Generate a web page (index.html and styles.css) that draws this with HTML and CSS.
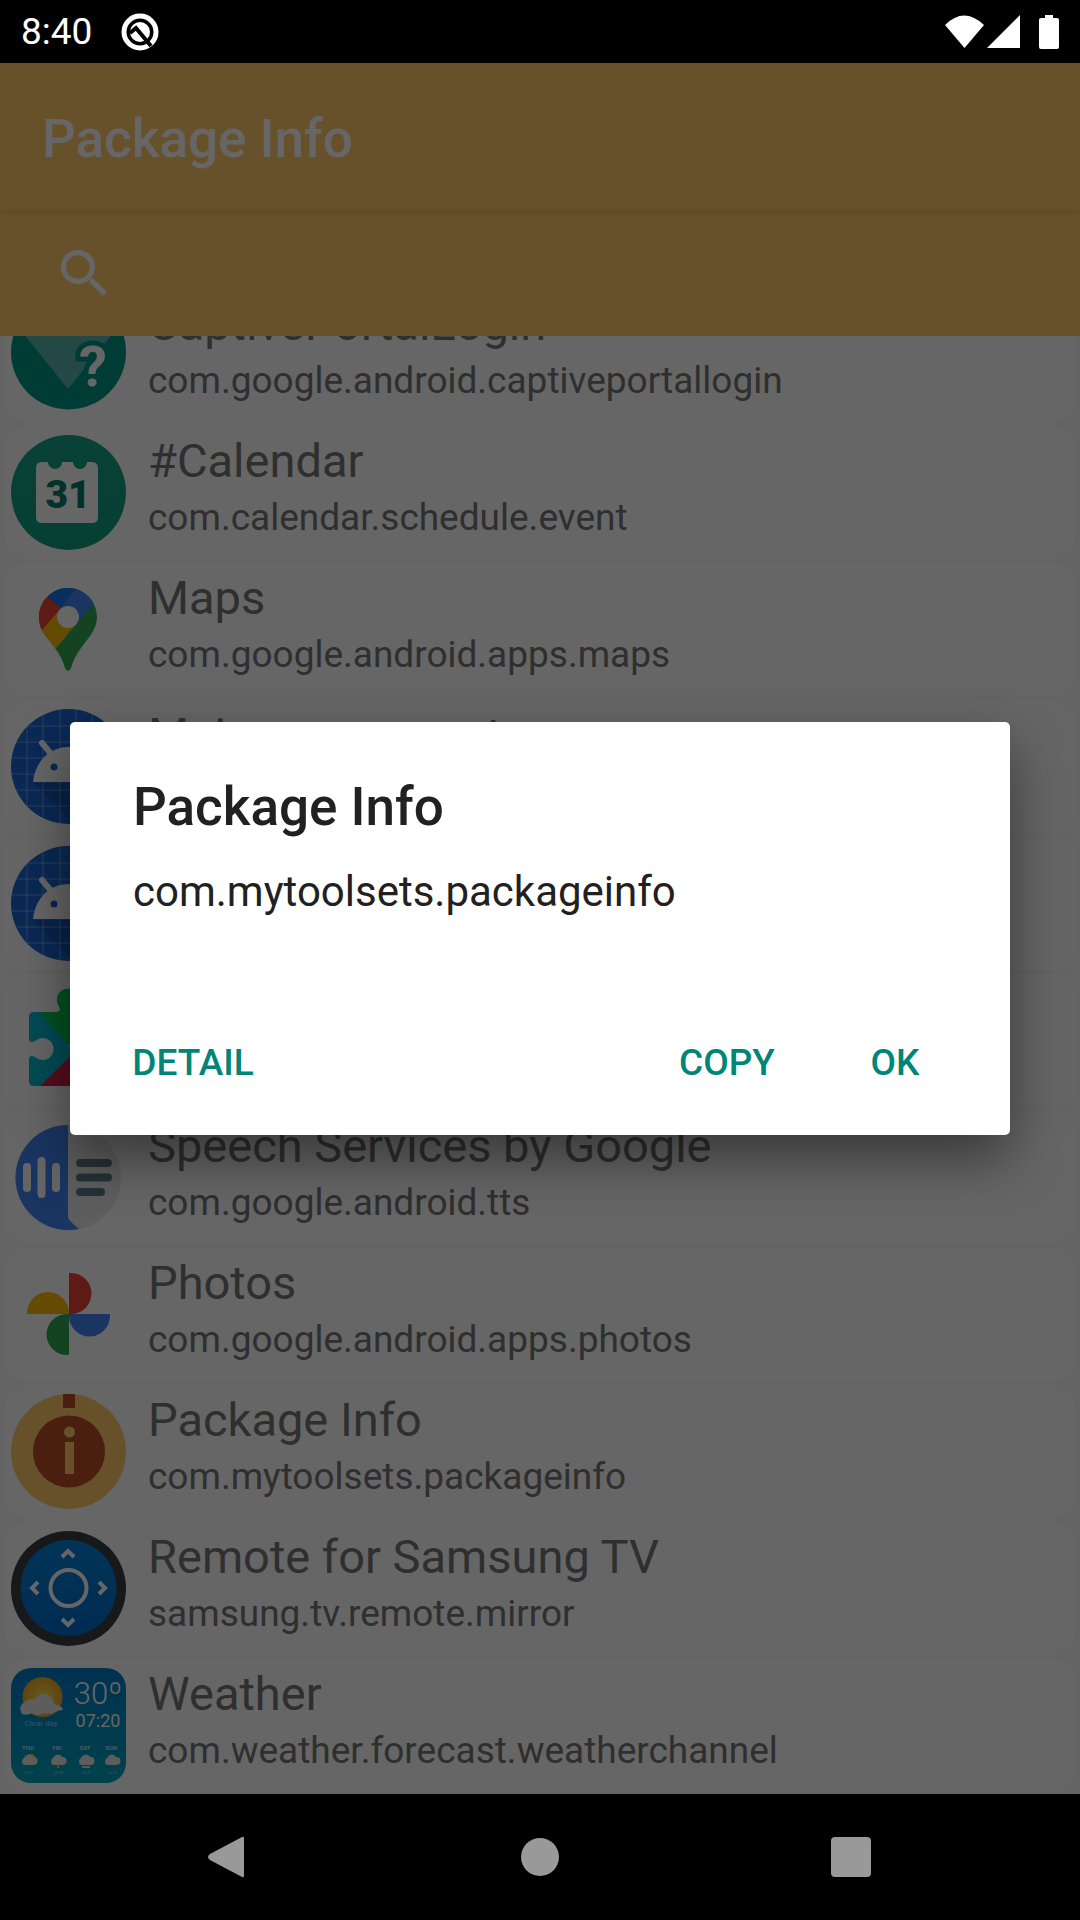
FILE: index.html
```html
<!DOCTYPE html>
<html lang="en">
<head>
  <meta charset="UTF-8">
  <meta name="viewport" content="width=device-width, initial-scale=1.0">
  <title>Package Info</title>
  <link rel="stylesheet" href="styles.css">
</head>
<body>

  <div class="status-bar">
    <span class="clock">8:40</span>
    <svg class="q-icon" width="38" height="38" viewBox="0 0 38 38">
      <circle cx="19" cy="19" r="16" fill="none" stroke="#fff" stroke-width="5"/>
      <circle cx="19" cy="19" r="10" fill="#fff"/>
      <path d="M9 20l6-5 15 18" fill="none" stroke="#000" stroke-width="4"/>
    </svg>
    <div class="status-icons">
      <svg width="39" height="34" viewBox="0 0 39 34"><path d="M0 10Q19 -9 39 10L19.500 33z" fill="#fff"/></svg>
      <svg width="33" height="34" viewBox="0 0 33 34"><path d="M33 0v33H0z" fill="#fff"/></svg>
      <svg class="battery" width="20" height="34" viewBox="0 0 20 34"><path d="M6 0h8v3h4q2 0 2 2v27q0 2-2 2H2q-2 0-2-2V5q0-2 2-2h4z" fill="#fff"/></svg>
    </div>
  </div>

  <div class="app">
    <header class="toolbar">
      <h1>Package Info</h1>
    </header>
    <div class="search-bar">
      <button class="search-button" aria-label="Search">
        <svg width="63" height="63" viewBox="0 0 24 24"><path fill="#fff" d="M15.500 14h-.79l-.28-.27A6.471 6.471 0 0 0 16 9.500 6.500 6.500 0 1 0 9.500 16c1.610 0 3.090-.59 4.230-1.570l.27.28v.79l5 4.990L20.490 19l-4.990-5zm-6 0C7.010 14 5 11.990 5 9.500S7.010 5 9.500 5 14 7.010 14 9.500 11.990 14 9.500 14z"/></svg>
      </button>
    </div>

    <ul class="package-list">
      <li class="package">
        <svg class="package-icon" viewBox="0 0 115 115">
          <defs>
            <clipPath id="round"><circle cx="57.500" cy="57.500" r="57.500"/></clipPath>
            <clipPath id="portalRound"><circle cx="57.500" cy="54" r="57.500"/></clipPath>
          </defs>
          <g clip-path="url(#portalRound)">
            <rect width="115" height="115" fill="#009688"/>
            <path d="M-16 0h146L57 91z" fill="#5bb5ac"/>
            <text x="82" y="88" class="question">?</text>
          </g>
        </svg>
        <div class="package-text">
          <div class="package-name">CaptivePortalLogin</div>
          <div class="package-id">com.google.android.captiveportallogin</div>
        </div>
      </li>

      <li class="package">
        <svg class="package-icon" viewBox="0 0 115 115">
          <defs><linearGradient id="calendarBg" x2="0" y2="1"><stop offset="0" stop-color="#15a386"/><stop offset="1" stop-color="#109c80"/></linearGradient></defs>
          <circle cx="57.500" cy="57.500" r="57.500" fill="url(#calendarBg)"/>
          <path d="M31 27h6a7 7 0 0 0 14 0h11a7 7 0 0 0 14 0h5q6 0 6 6v49q0 6-6 6H31q-6 0-6-6V33q0-6 6-6z" fill="#fff"/>
          <text x="57" y="73" class="calendar-day">31</text>
        </svg>
        <div class="package-text">
          <div class="package-name">#Calendar</div>
          <div class="package-id">com.calendar.schedule.event</div>
        </div>
      </li>

      <li class="package">
        <svg class="package-icon" viewBox="0 0 115 115">
          <defs><clipPath id="pin"><path d="M57 16C41 16 28 29 28 45c0 7 2 13 6 18l10 13c5 7 8 13 10 20q3 6 6 0c2-7 5-13 10-20l9-12c4-6 7-12 7-19 0-16-13-29-29-29z"/></clipPath></defs>
          <g clip-path="url(#pin)">
            <rect width="115" height="115" fill="#34a853"/>
            <path d="M31 56l16-20 19 15-21 25-30 10z" fill="#fbbc04"/>
            <path d="M37 25l13 11-19 22-21 2V10z" fill="#ea4335"/>
            <path d="M37 25l20 17L80 5H30z" fill="#1a73e8"/>
            <path d="M67 15L48 37l18 14 30-36z" fill="#4285f4"/>
          </g>
          <circle cx="57" cy="45" r="11" fill="#fff"/>
        </svg>
        <div class="package-text">
          <div class="package-name">Maps</div>
          <div class="package-id">com.google.android.apps.maps</div>
        </div>
      </li>

      <li class="package">
        <svg class="package-icon" viewBox="0 0 115 115">
          <defs>
            <g id="droid">
              <g clip-path="url(#round)">
                <rect width="115" height="115" fill="#1a68d4"/>
                <path d="M22 74h71l22 22v19H63z" fill="#1257b8"/>
                <path d="M16 0v115M32 0v115M49 0v115M65 0v115M81 0v115M97 0v115M0 17h115M0 33h115M0 49h115M0 65h115M0 81h115M0 97h115" stroke="#fff" stroke-opacity=".35"/>
              </g>
              <path d="M31 34l10 12M84 34L74 46" stroke="#fff" stroke-width="6" stroke-linecap="round"/>
              <path d="M22 73c2-20 16-35 35.500-35S91 53 93 73z" fill="#fff"/>
              <circle cx="43" cy="58" r="3.500" fill="#1a68d4"/>
              <circle cx="72" cy="58" r="3.500" fill="#1a68d4"/>
            </g>
          </defs>
          <use href="#droid"/>
        </svg>
        <div class="package-text">
          <div class="package-name">Main components</div>
          <div class="package-id">com.google.mainline.telemetry</div>
        </div>
      </li>

      <li class="package">
        <svg class="package-icon" viewBox="0 0 115 115"><use href="#droid"/></svg>
        <div class="package-text">
          <div class="package-name">Main components</div>
          <div class="package-id">com.google.android.modulemetadata</div>
        </div>
      </li>

      <li class="package">
        <svg class="package-icon" viewBox="0 0 115 115">
          <defs><clipPath id="puzzle"><path d="M23 29h22q6 0 3-6a11 11 0 1 1 18 0q-3 6 3 6h18q5 0 5 5v64q0 5-5 5H23q-5 0-5-5V77q0-6 6-3a11 11 0 1 0 0-16q-6 3-6-3V34q0-5 5-5z"/></clipPath></defs>
          <g clip-path="url(#puzzle)">
            <rect width="115" height="115" fill="#00bcd4"/>
            <path d="M28 29V0h87v29L57 62z" fill="#00c853"/>
            <path d="M28 104l37-36 40 36z" fill="#d8224a"/>
            <path d="M57 62l58-33v75h-10z" fill="#fbc02d"/>
          </g>
        </svg>
        <div class="package-text">
          <div class="package-name">Google Play services</div>
          <div class="package-id">com.google.android.gms</div>
        </div>
      </li>

      <li class="package">
        <svg class="package-icon" viewBox="0 0 115 115">
          <circle cx="57" cy="57.500" r="53" fill="#ececec"/>
          <path d="M57 5v92q0 3 11 12-4 1-11 1A52.500 52.500 0 0 1 57 5z" fill="#4285f4"/>
          <path d="M16 47v21M30.500 41v33M45 47v21" stroke="#fff" stroke-width="8" stroke-linecap="round"/>
          <path d="M69 43h28M69 57.500h28M69 72h21" stroke="#607d8b" stroke-width="8" stroke-linecap="round"/>
        </svg>
        <div class="package-text">
          <div class="package-name">Speech Services by Google</div>
          <div class="package-id">com.google.android.tts</div>
        </div>
      </li>

      <li class="package">
        <svg class="package-icon" viewBox="0 0 115 115">
          <path d="M58 16h2a20.500 20.500 0 0 1 0 41h-2z" fill="#ea4335"/>
          <path d="M58 57h41v2a20.500 20.500 0 0 1-41 0z" fill="#4285f4"/>
          <path d="M58 57v41h-2a20.500 20.500 0 0 1 0-41z" fill="#34a853"/>
          <path d="M58 57H16v-1a21 21 0 0 1 42 0z" fill="#fbbc04"/>
        </svg>
        <div class="package-text">
          <div class="package-name">Photos</div>
          <div class="package-id">com.google.android.apps.photos</div>
        </div>
      </li>

      <li class="package">
        <svg class="package-icon" viewBox="0 0 115 115">
          <circle cx="57.500" cy="57.500" r="57.500" fill="#ffca6b"/>
          <path d="M52 0h12v14H52z" fill="#b84e28"/>
          <circle cx="58" cy="57.500" r="36" fill="#b84e28"/>
          <circle cx="58.500" cy="38" r="5.500" fill="#ffca6b"/>
          <path d="M54 48h9v32h-9z" fill="#ffca6b"/>
        </svg>
        <div class="package-text">
          <div class="package-name">Package Info</div>
          <div class="package-id">com.mytoolsets.packageinfo</div>
        </div>
      </li>

      <li class="package">
        <svg class="package-icon" viewBox="0 0 115 115">
          <defs><linearGradient id="remoteBg" x2="0" y2="1"><stop offset="0" stop-color="#0084d8"/><stop offset="1" stop-color="#006cd0"/></linearGradient></defs>
          <circle cx="57.500" cy="57.500" r="57.500" fill="#3b3c40"/>
          <circle cx="57.500" cy="57" r="48" fill="url(#remoteBg)"/>
          <g fill="none" stroke="#fff" stroke-width="4">
            <circle cx="57.500" cy="57" r="18"/>
            <path d="M51 26l6-6 6 6M51 88l6 6 6-6M27 51l-6 6 6 6M88 51l6 6-6 6"/>
          </g>
        </svg>
        <div class="package-text">
          <div class="package-name">Remote for Samsung TV</div>
          <div class="package-id">samsung.tv.remote.mirror</div>
        </div>
      </li>

      <li class="package">
        <svg class="package-icon" viewBox="0 0 115 115">
          <defs>
            <linearGradient id="sky" x2="0" y2="1"><stop offset="0" stop-color="#007cc8"/><stop offset="1" stop-color="#00a4bc"/></linearGradient>
            <radialGradient id="sun"><stop offset="0" stop-color="#ffe14a"/><stop offset="1" stop-color="#f0a828"/></radialGradient>
            <path id="cloud" d="M3 12a4 4 0 0 1 0-7 5 5 0 0 1 9-1 4 4 0 0 1 1 8z"/>
          </defs>
          <rect width="115" height="115" rx="20" fill="url(#sky)"/>
          <circle cx="31.500" cy="29" r="20" fill="url(#sun)"/>
          <path d="M11 46q-5-8 4-13 5-4 9-1 5-9 13-5 6 3 6 9 8 1 9 6-5 0-7 2-7 3-12 1-7 4-12 0-5 3-10 1z" fill="#e8e8e8"/>
          <text x="30" y="58" class="weather-note">Clear day</text>
          <text x="87" y="36" class="weather-degrees">30º</text>
          <text x="87" y="59" class="weather-time">07:20</text>
          <g class="weather-days">
            <text x="17" y="82">THU</text>
            <text x="46" y="82">FRI</text>
            <text x="74" y="82">SAT</text>
            <text x="100" y="82">SUN</text>
          </g>
          <circle cx="20" cy="90" r="4" fill="#ffc928"/>
          <g fill="#e8e8e8">
            <use href="#cloud" x="10" y="85"/>
            <use href="#cloud" x="39" y="85"/>
            <use href="#cloud" x="67" y="85"/>
            <use href="#cloud" x="93" y="85"/>
          </g>
          <path d="M47 96v4" stroke="#d8d828" stroke-width="2"/>
          <path d="M71 99h8" stroke="#c8e4f0" stroke-width="2"/>
          <g class="weather-temps">
            <text x="17" y="106">18/30</text>
            <text x="47" y="106">18/30</text>
            <text x="75" y="106">18/30</text>
            <text x="101" y="106">18/30</text>
          </g>
        </svg>
        <div class="package-text">
          <div class="package-name">Weather</div>
          <div class="package-id">com.weather.forecast.weatherchannel</div>
        </div>
      </li>
    </ul>

    <div class="scrim">
      <div class="dialog" role="dialog" aria-labelledby="dialogTitle">
        <h2 id="dialogTitle">Package Info</h2>
        <p>com.mytoolsets.packageinfo</p>
        <div class="dialog-buttons">
          <button class="detail-button">DETAIL</button>
          <button>COPY</button>
          <button>OK</button>
        </div>
      </div>
    </div>
  </div>

  <nav class="nav-bar">
    <button aria-label="Back"><svg width="42" height="42" viewBox="0 0 42 42"><path d="M37 2v38q0 2-2 1L3 24q-4-3 0-6L35 1q2-1 2 1z" fill="#999"/></svg></button>
    <button aria-label="Home"><svg width="42" height="42" viewBox="0 0 42 42"><circle cx="21" cy="21" r="19" fill="#999"/></svg></button>
    <button aria-label="Recent apps"><svg width="42" height="42" viewBox="0 0 42 42"><rect x="0" y="1" width="40" height="40" rx="4" fill="#999"/></svg></button>
  </nav>

</body>
</html>
```
FILE: styles.css
```css
* {
  box-sizing: border-box;
}

html, body {
  height: 100%;
  margin: 0;
}

body {
  display: flex;
  flex-direction: column;
  overflow: hidden;
  background: #000;
  font-family: Roboto, "Liberation Sans", sans-serif;
}

h1, h2, p, ul {
  margin: 0;
  padding: 0;
}

svg {
  display: block;
}

button {
  padding: 0;
  border: none;
  background: none;
  font-family: inherit;
  cursor: pointer;
}

/* Status bar */
.status-bar {
  display: flex;
  flex: none;
  align-items: center;
  height: 63px;
  padding: 0 21px;
  color: #fff;
}

.clock {
  font-size: 37px;
  line-height: 66px;
}

.q-icon {
  margin-left: 29px;
}

.status-icons {
  display: flex;
  gap: 3px;
  margin-left: auto;
}

.battery {
  margin-left: 16px;
}

/* App */
.app {
  position: relative;
  display: flex;
  flex: 1;
  flex-direction: column;
  min-height: 0;
  background: #fafafa;
}

.toolbar {
  position: relative;
  z-index: 1;
  display: flex;
  flex: none;
  align-items: center;
  height: 147px;
  padding: 4px 42px 0;
  background: #ffca6b;
  box-shadow: 0 2px 8px rgba(0, 0, 0, 0.12);
}

.toolbar h1 {
  color: #fff;
  font-size: 53px;
  font-weight: 500;
}

.search-bar {
  display: flex;
  flex: none;
  align-items: center;
  height: 126px;
  padding: 0 53px;
  background: #ffca6b;
}

/* list is scrolled down to its last row */
.package-list {
  display: flex;
  flex: 1;
  flex-direction: column;
  justify-content: flex-end;
  min-height: 0;
  padding: 0 4px;
  overflow: hidden;
  list-style: none;
}

.package {
  display: flex;
  flex: none;
  gap: 22px;
  margin: 2px 0;
  padding: 9px 7px;
  background: #fff;
  border-radius: 24px;
}

.package-icon {
  flex: none;
  width: 115px;
  height: 115px;
}

.package-text {
  color: #757575;
  white-space: nowrap;
}

.package-name {
  font-size: 47px;
  line-height: 52px;
}

.package-id {
  font-size: 37px;
  line-height: 62px;
}

/* Text inside the icons */
.package-icon text {
  text-anchor: middle;
}

.question {
  fill: #fff;
  stroke: #009688;
  stroke-width: 10px;
  paint-order: stroke;
  font-size: 56px;
  font-weight: 700;
}

.calendar-day {
  fill: #007d6b;
  font-size: 39px;
  font-weight: 900;
}

.weather-note {
  fill: #8fd0ff;
  font-size: 8px;
}

.weather-degrees {
  fill: #fff;
  font-size: 31px;
  font-weight: 300;
}

.weather-time {
  fill: #fff;
  font-size: 18px;
}

.weather-days {
  fill: #b5e4f5;
  font-size: 6px;
  font-weight: 700;
}

.weather-temps {
  fill: #7fd0e4;
  font-size: 4px;
}

/* Dialog */
.scrim {
  position: absolute;
  inset: 0;
  z-index: 2;
  display: flex;
  align-items: center;
  justify-content: center;
  padding: 0 70px;
  background: rgba(0, 0, 0, 0.6);
}

.dialog {
  width: 100%;
  padding: 52px 31px 10px;
  color: #212121;
  background: #fff;
  border-radius: 5px;
  box-shadow: 0 24px 56px rgba(0, 0, 0, 0.45);
}

.dialog h2 {
  padding: 0 32px;
  font-size: 53px;
  font-weight: 500;
  line-height: 66px;
}

.dialog p {
  padding: 26px 32px 82px;
  font-size: 42px;
  line-height: 51px;
}

.dialog-buttons {
  display: flex;
}

.dialog-buttons button {
  min-width: 168px;
  height: 126px;
  color: #008577;
  font-size: 37px;
  font-weight: 500;
}

.dialog-buttons .detail-button {
  margin-right: auto;
  margin-left: 8px;
}

/* Navigation bar */
.nav-bar {
  display: grid;
  flex: none;
  grid-template-columns: repeat(3, 1fr);
  justify-items: center;
  align-items: center;
  height: 126px;
  padding: 0 72px;
}
```
